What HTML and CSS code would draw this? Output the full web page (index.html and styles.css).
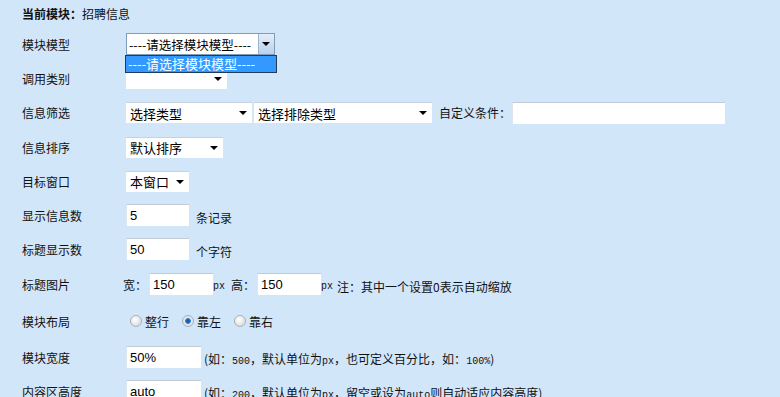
FILE: index.html
```html
<!DOCTYPE html>
<html lang="zh-CN">
<head>
    <meta charset="UTF-8">
    <title>模块设置</title>
    <link rel="stylesheet" href="styles.css">
</head>
<body>
    <div class="page">
        <p class="current"><b>当前模块：</b>招聘信息</p>

        <div class="row">
            <span class="label">模块模型</span>
            <div class="field">
                <span class="sel open w149">
                    <select><option>----请选择模块模型----</option></select>
                    <span class="btn"></span>
                </span>
                <ul class="dropdown">
                    <li>----请选择模块模型----</li>
                </ul>
            </div>
        </div>

        <div class="row">
            <span class="label">调用类别</span>
            <div class="field">
                <span class="sel w101"><select><option></option></select></span>
            </div>
        </div>

        <div class="row r35">
            <span class="label">信息筛选</span>
            <div class="field">
                <span class="sel w126"><select><option>选择类型</option></select></span>
                <span class="sel w178 ml2"><select><option>选择排除类型</option></select></span>
                <span class="txt ml7">自定义条件：</span>
                <input class="inp w213 ml1" type="text">
            </div>
        </div>

        <div class="row">
            <span class="label">信息排序</span>
            <div class="field">
                <span class="sel w97"><select><option>默认排序</option></select></span>
            </div>
        </div>

        <div class="row">
            <span class="label">目标窗口</span>
            <div class="field">
                <span class="sel w63"><select><option>本窗口</option></select></span>
            </div>
        </div>

        <div class="row">
            <span class="label">显示信息数</span>
            <div class="field">
                <input class="inp w63" type="text" value="5">
                <span class="txt ml7 low">条记录</span>
            </div>
        </div>

        <div class="row">
            <span class="label">标题显示数</span>
            <div class="field">
                <input class="inp w63" type="text" value="50">
                <span class="txt ml7 low">个字符</span>
            </div>
        </div>

        <div class="row r36">
            <span class="label">标题图片</span>
            <div class="field shift">
                <span class="txt">宽：</span>
                <input class="inp w64 ml2" type="text" value="150">
                <span class="en low">px</span>
                <span class="txt ml6">高：</span>
                <input class="inp w64 ml2" type="text" value="150">
                <span class="en low">px</span>
                <span class="txt ml4 low">注：其中一个设置0表示自动缩放</span>
            </div>
        </div>

        <div class="row r38">
            <span class="label">模块布局</span>
            <div class="field radios">
                <label><input type="radio" name="layout">整行</label>
                <label><input type="radio" name="layout" checked>靠左</label>
                <label><input type="radio" name="layout">靠右</label>
            </div>
        </div>

        <div class="row">
            <span class="label">模块宽度</span>
            <div class="field">
                <input class="inp w75" type="text" value="50%">
                <span class="hint">(如：<span class="en">500</span>，默认单位为<span class="en">px</span>，也可定义百分比，如：<span class="en">100%</span>)</span>
            </div>
        </div>

        <div class="row">
            <span class="label">内容区高度</span>
            <div class="field">
                <input class="inp w75" type="text" value="auto">
                <span class="hint">(如：<span class="en">200</span>，默认单位为<span class="en">px</span>，留空或设为<span class="en">auto</span>则自动适应内容高度)</span>
            </div>
        </div>
    </div>
</body>
</html>
```

FILE: styles.css
```css
body {
    margin: 0;
    background-color: #d2e6fa;
    font-family: "Noto Sans CJK SC", sans-serif;
    font-size: 12px;
    color: #111;
    overflow: hidden;
}
.page {
    padding: 6px 0 0 22px;
}
.current {
    margin: 0;
    height: 21px;
    line-height: 16px;
}
.current b {
    font-weight: bold;
}

.row {
    display: flex;
    align-items: center;
    height: 34px;
}
.r35 { height: 35px; }
.r36 { height: 36px; }
.r38 { height: 38px; }
.label {
    width: 104px;
    flex: none;
}
.field {
    display: flex;
    align-items: center;
    position: relative;
}
.field.shift {
    margin-left: -3px;
}

/* select boxes */
.sel {
    position: relative;
    display: inline-block;
    height: 21px;
    background: #fff;
    border-top: 1px solid #c6d2de;
    box-sizing: border-box;
}
.sel select {
    appearance: none;
    -webkit-appearance: none;
    border: 0;
    outline: 0;
    background: transparent;
    width: 100%;
    height: 20px;
    padding: 0 0 0 4px;
    font-family: "Noto Sans CJK SC", sans-serif;
    font-size: 13px;
    color: #000;
}
.sel::after {
    content: "";
    position: absolute;
    right: 5px;
    top: 8px;
    border-left: 4px solid transparent;
    border-right: 4px solid transparent;
    border-top: 4px solid #000;
}
.sel.open {
    border: 1px solid #7f9db9;
    height: 22px;
}
.sel.open select {
    width: 132px;
    padding-left: 2px;
    font-size: 12.5px;
}
.sel.open::after {
    right: 4px;
    top: 8px;
    z-index: 1;
}
.sel.open .btn {
    position: absolute;
    right: 0;
    top: 0;
    width: 15px;
    height: 20px;
    background: linear-gradient(#e4eefa, #b9d0ee);
    border-left: 1px solid #9bb4d4;
}
.dropdown {
    position: absolute;
    left: -1px;
    top: 22px;
    width: 150px;
    margin: 0;
    padding: 0;
    list-style: none;
    border: 1px solid #1c3c60;
    background: #3399ff;
    z-index: 5;
}
.dropdown li {
    height: 16px;
    line-height: 16px;
    padding-left: 2px;
    color: #fff;
    font-size: 13px;
}

.w149 { width: 149px; }
.w101 { width: 101px; }
.w126 { width: 126px; }
.w178 { width: 178px; }
.w97 { width: 97px; }
.w63 { width: 63px; }
.w64 { width: 64px; }
.w75 { width: 75px; }
.w213 { width: 213px; }
.ml1 { margin-left: 1px; }
.ml2 { margin-left: 2px; }
.ml4 { margin-left: 4px; }
.ml6 { margin-left: 6px; }
.ml7 { margin-left: 7px; }

/* text inputs */
.inp {
    height: 22px;
    box-sizing: border-box;
    border: 0;
    border-top: 1px solid #c2ccd6;
    border-left: 1px solid #dde6ef;
    background: #fff;
    padding: 0 3px;
    font-family: "Liberation Sans", sans-serif;
    font-size: 13px;
    color: #000;
    outline: 0;
}
.txt {
    white-space: nowrap;
}
.low {
    position: relative;
    top: 2px;
}
.en {
    font-family: "Liberation Mono", monospace;
    font-size: 10px;
}
.hint {
    margin-left: 3px;
    white-space: nowrap;
    position: relative;
    top: 1px;
}

/* radio buttons */
.radios {
    margin-left: 4px;
}
.radios label {
    display: flex;
    align-items: center;
    margin-right: 13px;
}
.radios input {
    appearance: none;
    -webkit-appearance: none;
    width: 12px;
    height: 12px;
    margin: 0 3px 0 0;
    border-radius: 50%;
    border: 1px solid #a8b0b8;
    background: radial-gradient(circle at 40% 35%, #ffffff, #d0d4d8);
    box-sizing: border-box;
}
.radios input:checked {
    background: radial-gradient(circle, #0a4f9c 0, #2a7bd0 2.5px, #e8ecf0 3.2px, #cfd4d9 100%);
}
```
